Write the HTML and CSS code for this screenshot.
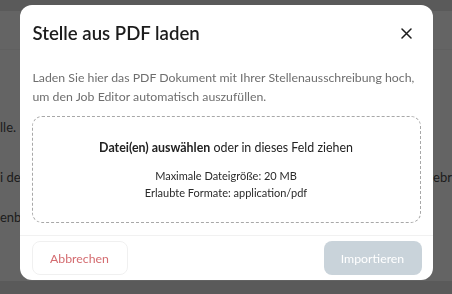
FILE: index.html
```html
<!DOCTYPE html>
<html lang="de">
<head>
<meta charset="utf-8">
<title>Stelle aus PDF laden</title>
<link rel="stylesheet" href="styles.css">
</head>
<body>
<div class="page">
  <div class="page-top"></div>
  <div class="page-head"></div>
  <div class="page-body">
    <div class="row row-1"><span>lle.</span></div>
    <div class="row row-2"><span>i der Erstellung</span><span>gebr</span></div>
    <div class="row row-3"><span>enbeschreibung</span></div>
  </div>
  <div class="page-bottom"></div>
</div>
<div class="overlay">
  <div class="modal" role="dialog" aria-labelledby="dlg-title">
    <div class="modal-header">
      <h2 id="dlg-title" class="modal-title">Stelle aus PDF laden</h2>
      <button class="close-btn" aria-label="Schließen">
        <svg width="11" height="11" viewBox="0 0 11 11"><path d="M1 1L10 10M10 1L1 10" stroke="#1c1c1c" stroke-width="1.5" stroke-linecap="round"/></svg>
      </button>
    </div>
    <div class="modal-body">
      <p class="intro">Laden Sie hier das PDF Dokument mit Ihrer Stellenausschreibung hoch, um den Job Editor automatisch auszufüllen.</p>
      <div class="dropzone">
        <p class="drop-main"><strong>Datei(en) auswählen</strong> oder in dieses Feld ziehen</p>
        <p class="drop-info">Maximale Dateigröße: 20 MB<br>Erlaubte Formate: application/pdf</p>
      </div>
    </div>
    <div class="modal-footer">
      <button class="btn btn-cancel">Abbrechen</button>
      <button class="btn btn-import" disabled>Importieren</button>
    </div>
  </div>
</div>
</body>
</html>
```
FILE: styles.css
```css
* { box-sizing: border-box; }
html, body {
  margin: 0;
  padding: 0;
  width: 452px;
  height: 294px;
  overflow: hidden;
  font-family: "Lato", "Noto Sans", sans-serif;
}
.page {
  height: 294px;
  background: #fbfbfb;
  display: flex;
  flex-direction: column;
}
.page-top {
  height: 11px;
  background: #e2e2e2;
}
.page-head {
  height: 39px;
  border-bottom: 1px solid #f0f0f0;
}
.page-body {
  flex: 1;
  display: flex;
  flex-direction: column;
  padding-top: 68px;
  font-size: 13px;
  color: #4a4a4a;
}
.row {
  display: flex;
  justify-content: space-between;
  height: 19px;
  line-height: 19px;
  white-space: nowrap;
}
.row-2 { margin-top: 31px; }
.row-3 { margin-top: 21px; }
.page-bottom {
  height: 13px;
  background: #e2e2e2;
}
.overlay {
  position: fixed;
  inset: 0;
  background: rgba(0, 0, 0, 0.6);
  display: flex;
  justify-content: center;
  align-items: flex-start;
  padding-top: 5px;
}
.modal {
  width: 413px;
  height: 275px;
  background: #fff;
  border-radius: 12px;
  display: flex;
  flex-direction: column;
  overflow: hidden;
}
.modal-header {
  display: flex;
  justify-content: space-between;
  align-items: center;
  padding: 14px 12px 0 13px;
}
.modal-title {
  margin: 0;
  font-size: 18.6px;
  line-height: 28px;
  font-weight: 600;
  color: #1c1c1c;
}
.close-btn {
  width: 24px;
  height: 24px;
  border: 0;
  background: none;
  padding: 0;
  margin-right: 2px;
  display: flex;
  align-items: center;
  justify-content: center;
}
.modal-body {
  flex: 1;
  padding: 21px 12px 0;
}
.intro {
  margin: 0 -8px 10px 1px;
  font-size: 12.3px;
  line-height: 19px;
  color: #6e6e6e;
}
.dropzone {
  height: 107px;
  border: 1px dashed #a8a8a8;
  border-radius: 10px;
  text-align: center;
  padding-top: 21px;
}
.drop-main {
  margin: 0 0 10px;
  font-size: 12.4px;
  line-height: 19px;
  color: #222;
}
.drop-main strong { font-weight: 700; }
.drop-info {
  margin: 0;
  font-size: 11px;
  line-height: 17px;
  color: #2a2a2a;
}
.modal-footer {
  border-top: 1px solid #f1f1f1;
  display: flex;
  justify-content: space-between;
  padding: 5px 11px 5px 12px;
}
.btn {
  height: 34px;
  border-radius: 8px;
  font-family: inherit;
  font-size: 12.3px;
  padding: 0;
}
.btn-cancel {
  width: 96px;
  background: #fff;
  border: 1px solid #f0f0f0;
  color: #d46c70;
}
.btn-import {
  width: 98px;
  background: #c9d3da;
  border: 0;
  color: #fff;
}
```
